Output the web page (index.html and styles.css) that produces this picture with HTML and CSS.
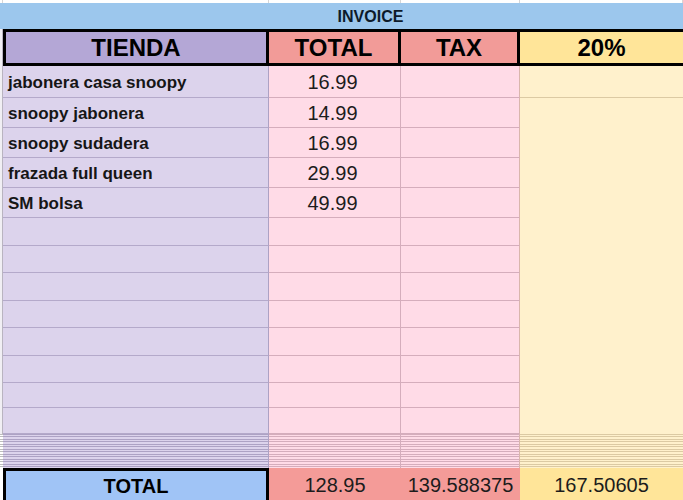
FILE: index.html
```html
<!DOCTYPE html>
<html lang="es">
<head>
<meta charset="utf-8">
<title>Invoice</title>
<link rel="stylesheet" href="styles.css">
</head>
<body>
<div class="sheet">
  <div class="strip g"></div><div class="strip c1"></div><div class="strip c2"></div><div class="strip c3"></div><div class="strip c4"></div>

  <div class="invoice">INVOICE</div>

  <div class="gutter"></div>
  <div class="pct-merged"></div>

  <div class="head c1 h-tienda">TIENDA</div>
  <div class="head c2 h-total">TOTAL</div>
  <div class="head c3 h-tax">TAX</div>
  <div class="head c4 h-pct">20%</div>

  <div class="cell c1 name">jabonera casa snoopy</div><div class="cell c2 amt">16.99</div><div class="cell c3 tax"></div><div class="cell c4 pct"></div>
  <div class="cell c1 name">snoopy jabonera</div><div class="cell c2 amt">14.99</div><div class="cell c3 tax"></div>
  <div class="cell c1 name">snoopy sudadera</div><div class="cell c2 amt">16.99</div><div class="cell c3 tax"></div>
  <div class="cell c1 name">frazada full queen</div><div class="cell c2 amt">29.99</div><div class="cell c3 tax"></div>
  <div class="cell c1 name">SM bolsa</div><div class="cell c2 amt">49.99</div><div class="cell c3 tax"></div>
  <div class="cell c1 name"></div><div class="cell c2 amt"></div><div class="cell c3 tax"></div>
  <div class="cell c1 name"></div><div class="cell c2 amt"></div><div class="cell c3 tax"></div>
  <div class="cell c1 name"></div><div class="cell c2 amt"></div><div class="cell c3 tax"></div>
  <div class="cell c1 name"></div><div class="cell c2 amt"></div><div class="cell c3 tax"></div>
  <div class="cell c1 name"></div><div class="cell c2 amt"></div><div class="cell c3 tax"></div>
  <div class="cell c1 name"></div><div class="cell c2 amt"></div><div class="cell c3 tax"></div>
  <div class="cell c1 name"></div><div class="cell c2 amt"></div><div class="cell c3 tax"></div>
  <div class="cell c1 name"></div><div class="cell c2 amt"></div><div class="cell c3 tax"></div>

  <div class="tiny g tiny-g"></div><div class="tiny c1 tiny-name"></div><div class="tiny c2 tiny-amt"></div><div class="tiny c3 tiny-tax"></div><div class="tiny c4 tiny-pct"></div>

  <div class="foot g foot-g"></div>
  <div class="foot c1 f-label">TOTAL</div>
  <div class="foot c2 f-sum">128.95</div>
  <div class="foot c3 f-sum">139.588375</div>
  <div class="foot c4 f-pct">167.50605</div>
</div>
</body>
</html>
```
FILE: styles.css
```css
html, body {
  margin: 0;
  padding: 0;
  background: #ffffff;
}

.sheet {
  display: grid;
  grid-template-columns: 3px 266px 132px 119px 163px;
  grid-template-rows: 3px 26px 37px 32px 30px 30px 30px 30px 28px 27px 28px 27px 28px 27px 25px 26px 34px 32px;
  width: 683px;
  height: 500px;
  overflow: hidden;
  font-family: "Liberation Sans", Arial, sans-serif;
  color: #111111;
}

.sheet > div {
  box-sizing: border-box;
  min-width: 0;
  white-space: nowrap;
  overflow: hidden;
}

.g { grid-column: 1; }
.c1 { grid-column: 2; }
.c2 { grid-column: 3; }
.c3 { grid-column: 4; }
.c4 { grid-column: 5; }

/* top strip */
.strip {
  background: #ffffff;
  border-right: 1px solid #d6d6d6;
}

/* invoice band */
.invoice {
  grid-column: 1 / -1;
  background: #9cc7ed;
  display: flex;
  align-items: center;
  justify-content: center;
  padding-left: 58px;
  padding-top: 1px;
  font-weight: bold;
  font-size: 16px;
  color: #0d1a2a;
}

.gutter {
  grid-column: 1;
  grid-row: 3 / 17;
  background: #f1eff4;
  border-right: 1px solid #b9b4c0;
}

/* header */
.head {
  display: flex;
  align-items: center;
  justify-content: center;
  font-weight: bold;
  font-size: 24px;
  color: #000000;
  border-top: 3px solid #000;
  border-bottom: 3px solid #000;
}
.h-tienda {
  background: #b4a7d6;
  border-left: 3px solid #000;
  border-right: 3px solid #000;
}
.h-total,
.h-tax {
  background: #f29b98;
  border-right: 3px solid #000;
}
.h-pct {
  background: #ffe599;
}

/* data cells */
.cell {
  display: flex;
  align-items: center;
  padding-top: 2px;
}
.name {
  background: #dcd3ec;
  border-right: 1px solid #ada2c4;
  border-bottom: 1px solid #b4a9ca;
  padding-left: 5px;
  font-weight: bold;
  font-size: 17px;
  color: #161616;
}
.amt {
  background: #ffdbe7;
  border-right: 1px solid #d5adbc;
  border-bottom: 1px solid #d5adbc;
  justify-content: center;
  padding-right: 4px;
  font-size: 20px;
  color: #1c1c1c;
}
.tax {
  background: #ffdbe7;
  border-right: 1px solid #d9b6ac;
  border-bottom: 1px solid #d5adbc;
}
.pct {
  background: #fff1cc;
  border-bottom: 1px solid #dccaa3;
}
.pct-merged {
  grid-column: 5;
  grid-row: 5 / 17;
  background: #fff1cc;
}

/* compressed hidden rows */
.tiny-g {
  background: repeating-linear-gradient(to bottom, #bdbdbd 0 1px, #ffffff 1px 2.5px);
}
.tiny-name {
  background: repeating-linear-gradient(to bottom, #ada2c4 0 1px, #dcd3ec 1px 2.5px);
  border-right: 1px solid #ada2c4;
}
.tiny-amt {
  background: repeating-linear-gradient(to bottom, #d5adbc 0 1px, #ffdbe7 1px 2.5px);
  border-right: 1px solid #d5adbc;
}
.tiny-tax {
  background: repeating-linear-gradient(to bottom, #d5adbc 0 1px, #ffdbe7 1px 2.5px);
  border-right: 1px solid #d9b6ac;
}
.tiny-pct {
  background: repeating-linear-gradient(to bottom, #dccaa3 0 1px, #fff1cc 1px 2.5px);
}

/* totals row */
.foot {
  display: flex;
  align-items: center;
  justify-content: center;
  padding-top: 2px;
  font-size: 20px;
  color: #1c1c1c;
}
.foot-g {
  background: #ffffff;
}
.f-label {
  background: #a0c4f6;
  border-top: 3px solid #000;
  border-left: 3px solid #000;
  border-right: 3px solid #000;
  font-weight: bold;
  color: #000000;
}
.f-sum {
  background: #f49b98;
}
.f-pct {
  background: #ffe599;
}
```
